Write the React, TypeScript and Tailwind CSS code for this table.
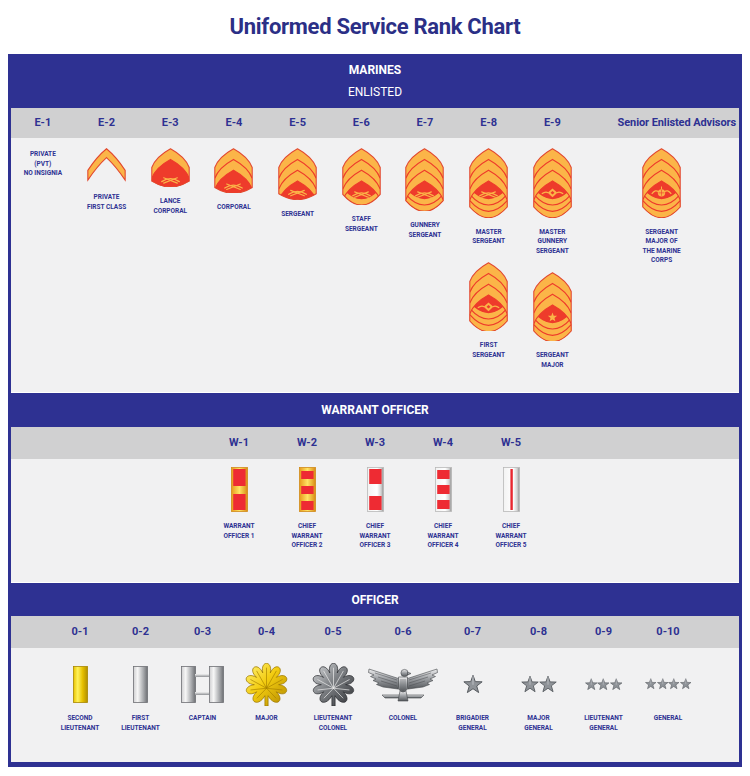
import React, { useId } from "react"

const GOLD = "#fbb548"
const RED = "#ee3b2b"
const EDGE = "#e2462d"

type Device = "rifles" | "diamond" | "star" | "ega"

function starPath(cx: number, cy: number, R: number, r: number) {
  const pts: string[] = []
  for (let i = 0; i < 10; i++) {
    const a = (Math.PI / 5) * i - Math.PI / 2
    const rad = i % 2 === 0 ? R : r
    pts.push(`${(cx + rad * Math.cos(a)).toFixed(2)} ${(cy + rad * Math.sin(a)).toFixed(2)}`)
  }
  return `M${pts.join(" L")} Z`
}

// enlisted stripes: n chevrons, r rockers, device in the red field
function Chevron({ n, r = 0, device = "rifles" }: { n: number; r?: number; device?: Device }) {
  const uid = useId().replace(/:/g, "")
  const T = 11
  const tr = 6.5
  const s = 20
  const H = r === 0 ? 33.5 + 6.5 * n : 52 + tr * r
  const yb = r === 0 ? H - 6 : H - 11
  const ctrl = 2 * H - yb
  const vp = (k: number) => `M0.8 ${s + k} Q5 ${9 + k} 20 ${0.8 + k} Q35 ${9 + k} 39.2 ${s + k}`
  const outline = `${vp(0)} L39.2 ${yb} Q20 ${ctrl} 0.8 ${yb} Z`
  const belowV = (k: number) =>
    `M-5 ${s + k + 6} L0.8 ${s + k} Q5 ${9 + k} 20 ${0.8 + k} Q35 ${9 + k} 39.2 ${s + k} L45 ${s + k + 6} L45 140 L-5 140 Z`
  const curve = (k: number) => `M-2 ${yb - k} L0.8 ${yb - k} Q20 ${ctrl - k} 39.2 ${yb - k} L42 ${yb - k}`
  const belowCurve = (k: number) => `${curve(k)} L42 140 L-2 140 Z`
  const cy = r === 0 ? H - 8.5 : H - tr * r - 6

  const vlines: number[] = []
  for (let i = 1; i <= n; i++) vlines.push(i * T)
  const rseps: number[] = []
  for (let j = 1; j < r; j++) rseps.push(j * tr)

  return (
    <svg width={39} height={(H * 39) / 40} viewBox={`0 0 40 ${H}`}>
      <defs>
        <clipPath id={`o${uid}`}>
          <path d={outline} />
        </clipPath>
        <clipPath id={`v${uid}`}>
          <path d={belowV(n * T)} />
        </clipPath>
      </defs>
      <g clipPath={`url(#o${uid})`}>
        <path d={outline} fill={GOLD} />
        <path d={belowV(n * T)} fill={RED} />
        {r > 0 && (
          <g clipPath={`url(#v${uid})`}>
            <path d={belowCurve(r * tr)} fill={GOLD} />
            <path d={curve(r * tr)} fill="none" stroke={RED} strokeWidth={1.2} />
            {rseps.map((k) => (
              <path key={k} d={curve(k)} fill="none" stroke={RED} strokeWidth={1.2} />
            ))}
          </g>
        )}
        {vlines.map((k) => (
          <path key={k} d={vp(k)} fill="none" stroke={RED} strokeWidth={1.2} />
        ))}
        {device === "rifles" && (
          <g fill="none" stroke={GOLD} strokeLinecap="round">
            <path d={`M11 ${cy + 3} Q20 ${cy - 3} 29 ${cy + 3}`} strokeWidth={1.3} />
            <path d={`M13 ${cy + 4.5} L27 ${cy - 1}`} strokeWidth={1.2} />
            <path d={`M13 ${cy - 1} L27 ${cy + 4.5}`} strokeWidth={1.2} />
          </g>
        )}
        {device === "diamond" && (
          <g>
            <path d={`M9 ${cy + 1} Q13 ${cy - 2} 15.5 ${cy}`} fill="none" stroke={GOLD} strokeWidth={1.2} />
            <path d={`M24.5 ${cy} Q27 ${cy - 2} 31 ${cy + 1}`} fill="none" stroke={GOLD} strokeWidth={1.2} />
            <path d={`M20 ${cy - 4.5} L25 ${cy} L20 ${cy + 4.5} L15 ${cy} Z`} fill={GOLD} />
            <path d={`M20 ${cy - 1.8} L22 ${cy} L20 ${cy + 1.8} L18 ${cy} Z`} fill={RED} />
          </g>
        )}
        {device === "star" && <path d={starPath(20, cy + 0.5, 5, 2.1)} fill={GOLD} />}
        {device === "ega" && (
          <g>
            <path d={`M10 ${cy + 1} Q14 ${cy - 4} 17 ${cy - 1}`} fill="none" stroke={GOLD} strokeWidth={1.3} />
            <path d={`M30 ${cy + 1} Q26 ${cy - 4} 23 ${cy - 1}`} fill="none" stroke={GOLD} strokeWidth={1.3} />
            <circle cx={20} cy={cy} r={3.8} fill={GOLD} />
            <path d={`M17 ${cy} L23 ${cy} M20 ${cy - 3} L20 ${cy + 3}`} stroke={RED} strokeWidth={0.6} />
            <path d={`M20 ${cy - 3.8} L20 ${cy - 6.5}`} stroke={GOLD} strokeWidth={1} />
          </g>
        )}
      </g>
      <path d={outline} fill="none" stroke={EDGE} strokeWidth={1.1} />
    </svg>
  )
}

function Pfc() {
  const d = "M20 0.8 Q30 9 39.2 23 L39.2 33 Q30 19 20 9.8 Q10 19 0.8 33 L0.8 23 Q10 9 20 0.8 Z"
  return (
    <svg width={39} height={35} viewBox="0 0 40 36">
      <path d={d} fill={GOLD} stroke={EDGE} strokeWidth={1.1} />
    </svg>
  )
}

function WarrantBar({ silver, blocks }: { silver?: boolean; blocks: [number, number][] | "line" }) {
  const id = silver ? "wbs" : "wbg"
  return (
    <svg width={17} height={45} viewBox="0 0 17 45">
      <defs>
        <linearGradient id={id} x1="0" y1="0" x2="1" y2="0">
          {silver ? (
            <>
              <stop offset="0" stopColor="#f2f2f2" />
              <stop offset="0.6" stopColor="#ffffff" />
              <stop offset="0.85" stopColor="#d2d2d2" />
              <stop offset="1" stopColor="#8e8e8e" />
            </>
          ) : (
            <>
              <stop offset="0" stopColor="#e89a1c" />
              <stop offset="0.5" stopColor="#ffe463" />
              <stop offset="1" stopColor="#d98a14" />
            </>
          )}
        </linearGradient>
      </defs>
      <rect x={0.5} y={0.5} width={16} height={44} fill={`url(#${id})`} stroke={silver ? "#b8b8b8" : "#d08a1a"} strokeWidth={0.8} />
      {blocks === "line" ? (
        <rect x={7.4} y={2} width={2.4} height={41} fill="#e8262f" />
      ) : (
        blocks.map(([a, b]) => <rect key={a} x={2.2} y={a} width={12.4} height={b - a} fill="#ee2b33" />)
      )}
    </svg>
  )
}

function Bar({ gold, w = 15 }: { gold?: boolean; w?: number }) {
  const id = gold ? "obg" : "obs"
  return (
    <svg width={w} height={37} viewBox={`0 0 ${w} 37`}>
      <defs>
        <linearGradient id={id} x1="0" y1="0" x2="1" y2="0">
          {gold ? (
            <>
              <stop offset="0" stopColor="#e9c400" />
              <stop offset="0.3" stopColor="#fff25a" />
              <stop offset="0.65" stopColor="#e6c000" />
              <stop offset="1" stopColor="#b18f00" />
            </>
          ) : (
            <>
              <stop offset="0" stopColor="#cfcfd1" />
              <stop offset="0.3" stopColor="#f7f7f7" />
              <stop offset="0.7" stopColor="#a9abae" />
              <stop offset="1" stopColor="#6d6f73" />
            </>
          )}
        </linearGradient>
      </defs>
      <rect x={0.5} y={0.5} width={w - 1} height={36} fill={`url(#${id})`} stroke={gold ? "#a88800" : "#6f7175"} strokeWidth={0.8} />
    </svg>
  )
}

function Captain() {
  return (
    <div className="relative flex gap-[13px]">
      <Bar />
      <div className="absolute left-[14px] top-[8px] h-[3px] w-[14px] bg-gradient-to-b from-[#f2f2f2] to-[#8f9195]" />
      <div className="absolute left-[14px] top-[26px] h-[3px] w-[14px] bg-gradient-to-b from-[#f2f2f2] to-[#8f9195]" />
      <Bar />
    </div>
  )
}

function leafPath() {
  const cx = 25
  const cy = 23
  const rs = 13
  const Rc = 27
  const angles = [-145, -109, -72.5, -36, 0, 36, 72.5, 109, 145]
  const step = 36.25
  const pt = (deg: number, rad: number) => {
    const a = (deg * Math.PI) / 180
    return `${(cx + rad * Math.sin(a)).toFixed(2)} ${(cy - rad * Math.cos(a)).toFixed(2)}`
  }
  let d = `M23.3 ${cy + 12}`
  angles.forEach((a, i) => {
    const end = i === angles.length - 1 ? `26.7 ${cy + 12}` : pt(a + step / 2, rs)
    d += ` C${pt(a - 15, Rc)} ${pt(a + 15, Rc)} ${end}`
  })
  d += " L26.7 46 L23.3 46 Z"
  return { d, veins: angles.map((a) => `M25 ${cy + 4} L${pt(a, 18)}`) }
}

function OakLeaf({ gold }: { gold?: boolean }) {
  const { d, veins } = leafPath()
  const id = gold ? "leafg" : "leafs"
  return (
    <svg width={47} height={43} viewBox="0 0 50 46">
      <defs>
        <linearGradient id={id} x1="0" y1="0" x2="1" y2="1">
          {gold ? (
            <>
              <stop offset="0" stopColor="#fff37a" />
              <stop offset="0.45" stopColor="#f3cc10" />
              <stop offset="1" stopColor="#b38900" />
            </>
          ) : (
            <>
              <stop offset="0" stopColor="#d8dadc" />
              <stop offset="0.45" stopColor="#7d8084" />
              <stop offset="1" stopColor="#303236" />
            </>
          )}
        </linearGradient>
      </defs>
      <path d={d} fill={`url(#${id})`} stroke={gold ? "#9a7600" : "#2c2e31"} strokeWidth={0.8} />
      {veins.map((v) => (
        <path key={v} d={v} stroke={gold ? "#a88200" : "#f0f0f0"} strokeWidth={0.9} opacity={0.8} />
      ))}
    </svg>
  )
}

function Eagle() {
  const left = "M33 13 L2 3 L1.5 6.5 L7 9 L3.5 10.5 L9 13 L6 14.5 L12 17 L9.5 18.5 L16 21 L31 23 Z"
  const right = "M39 13 L70 3 L70.5 6.5 L65 9 L68.5 10.5 L63 13 L66 14.5 L60 17 L62.5 18.5 L56 21 L41 23 Z"
  return (
    <svg width={72} height={36} viewBox="0 0 72 36">
      <defs>
        <linearGradient id="eag" x1="0" y1="0" x2="0" y2="1">
          <stop offset="0" stopColor="#eeeeef" />
          <stop offset="0.5" stopColor="#9b9ea2" />
          <stop offset="1" stopColor="#55585c" />
        </linearGradient>
      </defs>
      <g fill="url(#eag)" stroke="#45484c" strokeWidth={0.6}>
        <path d={left} />
        <path d={right} />
        <path d="M15 29 L57 29 L54 32 L18 32 Z" />
        <path d="M33 25 L39 25 L41 35 L31 35 Z" />
        <path d="M31.5 11 L40.5 11 L40.5 23 Q36 29 31.5 23 Z" />
        <circle cx={37.5} cy={7} r={3.6} />
        <path d="M40.5 6 L44 7.5 L40.5 9 Z" />
      </g>
      <g stroke="#4a4d51" strokeWidth={0.5}>
        <path d="M8 7 L30 14 M11 11 L30 17 M14 15 L30 20" />
        <path d="M64 7 L42 14 M61 11 L42 17 M58 15 L42 20" />
        <path d="M34 13 L34 24 M36 13 L36 25 M38 13 L38 24" />
      </g>
    </svg>
  )
}

function Stars({ count, size }: { count: number; size: number }) {
  return (
    <div className="flex">
      {Array.from({ length: count }).map((_, i) => (
        <svg key={i} width={size} height={size} viewBox="0 0 20 20">
          <path d={starPath(10, 10.8, 9.6, 3.9)} fill="#8f9398" stroke="#575b60" strokeWidth={1} />
          <path d="M10 1.5 L10 10.8" stroke="#c9ccd0" strokeWidth={0.8} />
        </svg>
      ))}
    </div>
  )
}

function Label({ lines, className = "mt-[10px]" }: { lines: string[]; className?: string }) {
  return (
    <div className={`${className} text-center text-[6.5px] font-bold leading-[9.5px] text-[#2e3192]`}>
      {lines.map((l) => (
        <div key={l}>{l}</div>
      ))}
    </div>
  )
}

const enlisted: { code: string; lines: string[]; badge?: React.ReactNode }[] = [
  { code: "E-1", lines: ["PRIVATE", "(PVT)", "NO INSIGNIA"] },
  { code: "E-2", lines: ["PRIVATE", "FIRST CLASS"], badge: <Pfc /> },
  { code: "E-3", lines: ["LANCE", "CORPORAL"], badge: <Chevron n={1} /> },
  { code: "E-4", lines: ["CORPORAL"], badge: <Chevron n={2} /> },
  { code: "E-5", lines: ["SERGEANT"], badge: <Chevron n={3} /> },
  { code: "E-6", lines: ["STAFF", "SERGEANT"], badge: <Chevron n={3} r={1} /> },
  { code: "E-7", lines: ["GUNNERY", "SERGEANT"], badge: <Chevron n={3} r={2} /> },
  { code: "E-8", lines: ["MASTER", "SERGEANT"], badge: <Chevron n={3} r={3} /> },
  { code: "E-9", lines: ["MASTER", "GUNNERY", "SERGEANT"], badge: <Chevron n={3} r={3} device="diamond" /> },
]

const warrant = [
  { code: "W-1", lines: ["WARRANT", "OFFICER 1"], bar: <WarrantBar blocks={[[2, 19], [27, 43]]} /> },
  { code: "W-2", lines: ["CHIEF", "WARRANT", "OFFICER 2"], bar: <WarrantBar blocks={[[4, 12], [19, 27], [34, 43]]} /> },
  { code: "W-3", lines: ["CHIEF", "WARRANT", "OFFICER 3"], bar: <WarrantBar silver blocks={[[2, 17], [29, 43]]} /> },
  { code: "W-4", lines: ["CHIEF", "WARRANT", "OFFICER 4"], bar: <WarrantBar silver blocks={[[3, 12], [18, 27], [33, 42]]} /> },
  { code: "W-5", lines: ["CHIEF", "WARRANT", "OFFICER 5"], bar: <WarrantBar silver blocks="line" /> },
]

const officers = [
  { code: "0-1", lines: ["SECOND", "LIEUTENANT"], icon: <Bar gold /> },
  { code: "0-2", lines: ["FIRST", "LIEUTENANT"], icon: <Bar /> },
  { code: "0-3", lines: ["CAPTAIN"], icon: <Captain /> },
  { code: "0-4", lines: ["MAJOR"], icon: <OakLeaf gold /> },
  { code: "0-5", lines: ["LIEUTENANT", "COLONEL"], icon: <OakLeaf /> },
  { code: "0-6", lines: ["COLONEL"], icon: <Eagle /> },
  { code: "0-7", lines: ["BRIGADIER", "GENERAL"], icon: <Stars count={1} size={20} /> },
  { code: "0-8", lines: ["MAJOR", "GENERAL"], icon: <Stars count={2} size={18} /> },
  { code: "0-9", lines: ["LIEUTENANT", "GENERAL"], icon: <Stars count={3} size={12.5} /> },
  { code: "0-10", lines: ["GENERAL"], icon: <Stars count={4} size={11.5} /> },
]

export default function App() {
  return (
    <div className="min-h-[776px] bg-white font-['Roboto',sans-serif]">
      <h1 className="flex h-[54px] items-center justify-center pb-[2px] text-[22px] font-bold tracking-[-0.3px] text-[#2b2f86]">
        Uniformed Service Rank Chart
      </h1>

      <div className="mx-[8px] border-x-[3px] border-b-[5px] border-[#2e3192] bg-[#f1f1f2]">
        {/* enlisted */}
        <div className="flex h-[54px] flex-col items-center bg-[#2e3192] pt-[5px] text-[12px] leading-[22px] text-white">
          <div className="font-bold">MARINES</div>
          <div>ENLISTED</div>
        </div>
        <div className="grid h-[30px] grid-cols-[repeat(9,63.7px)_1fr] items-center bg-[#d0d0d1] text-[11px] font-bold text-[#2e3192]">
          {enlisted.map((e) => (
            <div key={e.code} className="text-center">
              {e.code}
            </div>
          ))}
          <div className="whitespace-nowrap pr-[3px] text-right tracking-[-0.1px]">Senior Enlisted Advisors</div>
        </div>
        <div className="grid h-[254px] grid-cols-[repeat(9,63.7px)_1fr] content-start">
          {enlisted.map((e) =>
            e.badge ? (
              <div key={e.code} className="flex flex-col items-center pt-[10px]">
                {e.badge}
                <Label lines={e.lines} />
              </div>
            ) : (
              <div key={e.code} className="pt-[12px]">
                <Label lines={e.lines} className="" />
              </div>
            )
          )}
          <div className="flex flex-col items-center pt-[10px]">
            <Chevron n={3} r={3} device="ega" />
            <Label lines={["SERGEANT", "MAJOR OF", "THE MARINE", "CORPS"]} />
          </div>
          <div className="col-start-8 -mt-[4px] flex flex-col items-center">
            <Chevron n={3} r={3} device="diamond" />
            <Label lines={["FIRST", "SERGEANT"]} />
          </div>
          <div className="col-start-9 flex flex-col items-center pt-[6px]">
            <Chevron n={3} r={3} device="star" />
            <Label lines={["SERGEANT", "MAJOR"]} />
          </div>
        </div>

        {/* warrant officer */}
        <div className="flex h-[35px] items-center justify-center border-t border-white bg-[#2e3192] text-[12px] font-bold text-white">
          WARRANT OFFICER
        </div>
        <div className="grid h-[32px] grid-cols-[repeat(5,68px)] items-center justify-center bg-[#d0d0d1] text-[11px] font-bold text-[#2e3192]">
          {warrant.map((w) => (
            <div key={w.code} className="text-center">
              {w.code}
            </div>
          ))}
        </div>
        <div className="grid h-[123px] grid-cols-[repeat(5,68px)] content-start justify-center pt-[8px]">
          {warrant.map((w) => (
            <div key={w.code} className="flex flex-col items-center">
              {w.bar}
              <Label lines={w.lines} />
            </div>
          ))}
        </div>

        {/* officer */}
        <div className="flex h-[34px] items-center justify-center border-t border-white bg-[#2e3192] text-[12px] font-bold text-white">
          OFFICER
        </div>
        <div className="grid h-[32px] grid-cols-[60px_61px_63px_65px_68px_72px_67px_65px_65px_64px] items-center justify-center bg-[#d0d0d1] text-[11px] font-bold text-[#2e3192]">
          {officers.map((o) => (
            <div key={o.code} className="text-center">
              {o.code}
            </div>
          ))}
        </div>
        <div className="grid h-[114px] grid-cols-[60px_61px_63px_65px_68px_72px_67px_65px_65px_64px] content-start justify-center pt-[14px]">
          {officers.map((o) => (
            <div key={o.code} className="flex flex-col items-center">
              <div className="flex h-[44px] items-center justify-center">{o.icon}</div>
              <Label lines={o.lines} className="mt-[8px]" />
            </div>
          ))}
        </div>
      </div>
    </div>
  )
}
